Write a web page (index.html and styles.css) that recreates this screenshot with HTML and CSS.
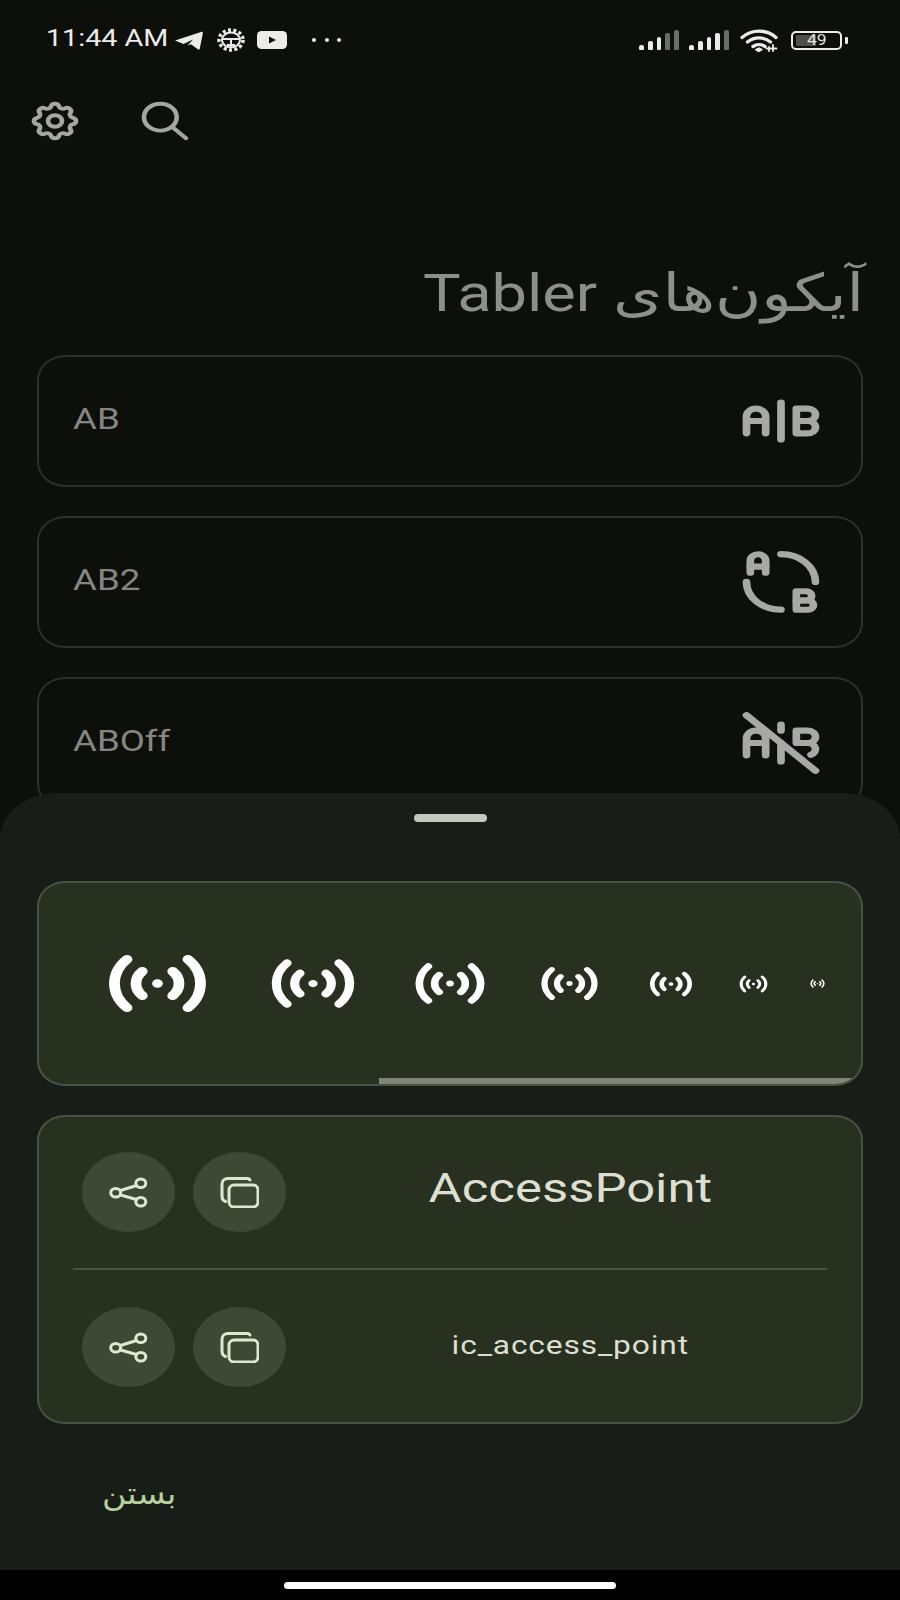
FILE: index.html
```html
<!DOCTYPE html>
<html lang="fa">
<head>
    <meta charset="UTF-8">
    <meta name="viewport" content="width=device-width, initial-scale=1.0">
    <title>Tabler Icons</title>
    <link rel="stylesheet" href="styles.css">
</head>
<body>

    <svg class="defs" aria-hidden="true">
        <defs>
            <g id="i-access-point">
                <path d="M12 12l0 .01"/>
                <path d="M14.828 9.172a4 4 0 0 1 0 5.656"/>
                <path d="M17.657 6.343a8 8 0 0 1 0 11.314"/>
                <path d="M9.168 14.828a4 4 0 0 1 0 -5.656"/>
                <path d="M6.337 17.657a8 8 0 0 1 0 -11.314"/>
            </g>
            <g id="i-share">
                <ellipse cx="6.700" cy="15.700" rx="5" ry="4.300"/>
                <ellipse cx="31.800" cy="6.300" rx="5" ry="4.300"/>
                <ellipse cx="31.800" cy="24.700" rx="5" ry="4.300"/>
                <path d="M11.500 13.500l16 -5"/>
                <path d="M11.500 18l16 4.500"/>
            </g>
            <g id="i-copy">
                <rect x="9" y="8" width="29" height="22" rx="5"/>
                <path d="M30 3c-.5 -1 -1.500 -1.500 -3 -1.500h-19c-3.500 0 -6 2.500 -6 5.500v12.500c0 2.500 1 4 3.500 5"/>
            </g>
        </defs>
    </svg>

    <div class="screen">

        <div class="status-bar">
            <div class="status-left">
                <span class="time">11:44 AM</span>
                <svg class="st-telegram" viewBox="0 0 28 19"><path d="M0 9.500l26 -8.500c1.500 -.5 2 .3 1.800 1.500l-3 15c-.3 1.300 -1 1.500 -2 .8l-6.800 -5l-3.500 1.200l5.500 -6l-9.500 4.500z"/></svg>
                <svg class="st-bug" viewBox="0 0 28 24">
                    <ellipse class="bug-teeth" cx="14" cy="12" rx="12" ry="10"/>
                    <ellipse class="bug-ring" cx="14" cy="12" rx="9" ry="7.500"/>
                    <path class="bug-ring" d="M5 11h18M14 11v8M10 17h8"/>
                </svg>
                <svg class="st-youtube" viewBox="0 0 30 18">
                    <rect width="30" height="18" rx="4.500"/>
                    <path class="yt-play" d="M12 5.500l7 3.500l-7 3.500z"/>
                </svg>
                <span class="st-dots"><i></i><i></i><i></i></span>
            </div>
            <div class="status-right">
                <div class="signal">
                    <i class="b1"></i><i class="b2"></i><i class="b3"></i><i class="b4 dim"></i><i class="b5 dim"></i>
                </div>
                <div class="signal">
                    <i class="b1"></i><i class="b2"></i><i class="b3"></i><i class="b4"></i><i class="b5 dim"></i>
                </div>
                <svg class="st-wifi" viewBox="0 0 38 23">
                    <path d="M2 8.500c10 -8.500 24 -8.500 34 0"/>
                    <path d="M7.500 13c7 -5.500 16 -5.500 23 0"/>
                    <path d="M13 17.500c3.500 -2.500 8.500 -2.500 12 0"/>
                    <path class="wifi-dot" d="M15.500 20.500l3.500 -1.700l3.500 1.700l-3.500 2.500z"/>
                    <path class="wifi-mark" d="M29 22v-4M33 22v-6M26.500 19.500h4M31.500 19.500h5"/>
                </svg>
                <div class="battery">
                    <div class="battery-body"><div class="battery-fill"></div><span class="battery-text">49</span></div>
                    <div class="battery-nub"></div>
                </div>
            </div>
        </div>

        <div class="toolbar">
            <svg class="tool-icon" viewBox="0 0 24 24" preserveAspectRatio="none">
                <path d="M10.325 4.317c.426 -1.756 2.924 -1.756 3.35 0a1.724 1.724 0 0 0 2.573 1.066c1.543 -.94 3.31 .826 2.37 2.37a1.724 1.724 0 0 0 1.065 2.572c1.756 .426 1.756 2.924 0 3.35a1.724 1.724 0 0 0 -1.066 2.573c.94 1.543 -.826 3.31 -2.37 2.37a1.724 1.724 0 0 0 -2.572 1.065c-.426 1.756 -2.924 1.756 -3.35 0a1.724 1.724 0 0 0 -2.573 -1.066c-1.543 .94 -3.31 -.826 -2.37 -2.37a1.724 1.724 0 0 0 -1.065 -2.572c-1.756 -.426 -1.756 -2.924 0 -3.35a1.724 1.724 0 0 0 1.066 -2.573c-.94 -1.543 .826 -3.31 2.37 -2.37c1 .608 2.296 .07 2.572 -1.065z"/>
                <path d="M9 12a3 3 0 1 0 6 0a3 3 0 0 0 -6 0"/>
            </svg>
            <svg class="tool-icon" viewBox="0 0 24 24" preserveAspectRatio="none">
                <path d="M10 10m-7 0a7 7 0 1 0 14 0a7 7 0 1 0 -14 0"/>
                <path d="M21 21l-6 -6"/>
            </svg>
        </div>

        <h1 class="page-title" dir="rtl"><span>آیکون‌های Tabler</span></h1>

        <div class="icon-list">
            <div class="icon-card">
                <span class="icon-name">AB</span>
                <svg class="list-icon" viewBox="0 0 24 24" preserveAspectRatio="none">
                    <path d="M3 16v-5.500a2.500 2.500 0 0 1 5 0v5.500m0 -4h-5"/>
                    <path d="M12 6l0 12"/>
                    <path d="M16 16v-8h3a2 2 0 0 1 0 4h-3m3 0a2 2 0 0 1 0 4h-3"/>
                </svg>
            </div>
            <div class="icon-card">
                <span class="icon-name">AB2</span>
                <svg class="list-icon" viewBox="0 0 24 24" preserveAspectRatio="none">
                    <path d="M16 21h3c.81 0 1.48 -.67 1.48 -1.48l.02 -.02c0 -.82 -.69 -1.500 -1.500 -1.500h-3v3z"/>
                    <path d="M16 15h2.500c.84 -.01 1.500 .66 1.500 1.500s-.66 1.500 -1.500 1.500h-2.500v-3z"/>
                    <path d="M4 9v-4c0 -1.036 .895 -2 2 -2s2 .964 2 2v4"/>
                    <path d="M2.990 11.980a9 9 0 0 0 9 9m9 -9a9 9 0 0 0 -9 -9"/>
                    <path d="M8 7h-4"/>
                </svg>
            </div>
            <div class="icon-card">
                <span class="icon-name">ABOff</span>
                <svg class="list-icon" viewBox="0 0 24 24" preserveAspectRatio="none">
                    <path d="M3 16v-5.500a2.500 2.500 0 0 1 5 0v5.500m0 -4h-5"/>
                    <path d="M12 12v6"/>
                    <path d="M12 6v2"/>
                    <path d="M16 8h3a2 2 0 1 1 0 4h-3m3 0a2 2 0 0 1 .83 3.820m-3.830 -3.820v-4"/>
                    <path d="M3 3l18 18"/>
                </svg>
            </div>
        </div>

        <div class="sheet">
            <div class="sheet-handle"></div>

            <div class="preview-card">
                <svg class="ap ap-1" viewBox="0 0 24 24" preserveAspectRatio="none"><use href="#i-access-point"/></svg>
                <svg class="ap ap-2" viewBox="0 0 24 24" preserveAspectRatio="none"><use href="#i-access-point"/></svg>
                <svg class="ap ap-3" viewBox="0 0 24 24" preserveAspectRatio="none"><use href="#i-access-point"/></svg>
                <svg class="ap ap-4" viewBox="0 0 24 24" preserveAspectRatio="none"><use href="#i-access-point"/></svg>
                <svg class="ap ap-5" viewBox="0 0 24 24" preserveAspectRatio="none"><use href="#i-access-point"/></svg>
                <svg class="ap ap-6" viewBox="0 0 24 24" preserveAspectRatio="none"><use href="#i-access-point"/></svg>
                <svg class="ap ap-7" viewBox="0 0 24 24" preserveAspectRatio="none"><use href="#i-access-point"/></svg>
                <div class="scroll-thumb"></div>
            </div>

            <div class="name-card">
                <div class="name-row">
                    <button class="round-btn" type="button"><svg viewBox="0 0 39 31"><use href="#i-share"/></svg></button>
                    <button class="round-btn" type="button"><svg viewBox="0 0 39 31"><use href="#i-copy"/></svg></button>
                    <div class="name-text"><span class="name-big">AccessPoint</span></div>
                </div>
                <div class="name-divider"></div>
                <div class="name-row">
                    <button class="round-btn" type="button"><svg viewBox="0 0 39 31"><use href="#i-share"/></svg></button>
                    <button class="round-btn" type="button"><svg viewBox="0 0 39 31"><use href="#i-copy"/></svg></button>
                    <div class="name-text"><span class="name-small">ic_access_point</span></div>
                </div>
            </div>

            <div class="sheet-actions"><span class="close-btn">بستن</span></div>

            <div class="nav-bar"><div class="home-pill"></div></div>
        </div>

    </div>

</body>
</html>
```

FILE: styles.css
```css
* {
    box-sizing: border-box;
}

body {
    margin: 0;
    background-color: #0d0f0b;
    font-family: Roboto, "DejaVu Sans", sans-serif;
}

.defs {
    position: absolute;
    width: 0;
    height: 0;
}

.screen {
    position: relative;
    width: 900px;
    height: 1600px;
    overflow: hidden;
    background-color: #0d0f0b;
}

/* status bar */
.status-bar {
    display: flex;
    justify-content: space-between;
    align-items: center;
    height: 80px;
    padding: 0 52px 0 46px;
}

.status-left,
.status-right {
    display: flex;
    align-items: center;
}

.time {
    display: inline-block;
    width: 129px;
    margin-bottom: 4px;
    font-size: 23.5px;
    color: #ececea;
    transform: scaleX(1.22);
    transform-origin: left center;
}

.st-telegram {
    width: 28px;
    height: 19px;
    fill: #ececea;
}

.st-bug {
    width: 28px;
    height: 24px;
    margin-left: 14px;
    fill: none;
    stroke: #ececea;
}

.bug-teeth {
    stroke-width: 3.500;
    stroke-dasharray: 3 2.400;
}

.bug-ring {
    stroke-width: 2;
}

.st-youtube {
    width: 30px;
    height: 18px;
    margin-left: 12px;
    fill: #ececea;
}

.yt-play {
    fill: #0d0f0b;
}

.st-dots {
    display: flex;
    gap: 8.500px;
    margin-left: 25px;
}

.st-dots i {
    width: 4px;
    height: 4px;
    border-radius: 50%;
    background-color: #ececea;
}

.signal {
    display: flex;
    align-items: flex-end;
    gap: 4px;
    height: 20px;
    margin-right: 10px;
}

.signal i {
    width: 4.800px;
    border-radius: 2px 2px 1px 1px;
    background-color: #ececea;
}

.signal .dim {
    background-color: #6c6d6a;
}

.b1 { height: 5px; }
.b2 { height: 9px; }
.b3 { height: 13px; }
.b4 { height: 17px; }
.b5 { height: 20px; }

.st-wifi {
    width: 38px;
    height: 23px;
    margin: 0 13px 0 1px;
    fill: none;
    stroke: #ececea;
    stroke-width: 3.400;
    stroke-linecap: round;
}

.wifi-dot {
    fill: #ececea;
    stroke-width: 1;
}

.wifi-mark {
    stroke-width: 1.800;
}

.battery {
    display: flex;
    align-items: center;
    gap: 3px;
}

.battery-body {
    position: relative;
    display: flex;
    align-items: center;
    justify-content: center;
    width: 51px;
    height: 19px;
    border: 2px solid #ececea;
    border-radius: 5px;
}

.battery-fill {
    position: absolute;
    left: 3px;
    top: 2px;
    bottom: 2px;
    width: 20px;
    border-radius: 1px;
    background-color: #4e4f4c;
}

.battery-text {
    position: relative;
    font-size: 14px;
    color: #e2e2df;
    transform: scaleX(1.250);
}

.battery-nub {
    width: 3px;
    height: 7px;
    border-radius: 1px;
    background-color: #ececea;
}

/* top toolbar */
.toolbar {
    display: flex;
    gap: 54px;
    padding: 18px 0 0 27px;
}

.tool-icon {
    width: 56px;
    height: 46px;
    fill: none;
    stroke: #a5a6a2;
    stroke-width: 2;
    stroke-linecap: round;
    stroke-linejoin: round;
}

.page-title {
    margin: 120px 36px 31px 37px;
    font-size: 52px;
    font-weight: 400;
    line-height: 60px;
    color: #8d8f8a;
}

.page-title span {
    display: inline-block;
    transform: scaleX(1.215);
    transform-origin: right center;
}

/* icon list behind the sheet */
.icon-list {
    display: flex;
    flex-direction: column;
    gap: 29px;
    margin: 0 37px;
}

.icon-card {
    display: flex;
    justify-content: space-between;
    align-items: center;
    height: 132px;
    padding: 0 34px;
    border: 2px solid #2d2f2b;
    border-radius: 28px / 25px;
}

.icon-name {
    display: inline-block;
    margin-bottom: 6px;
    font-size: 30px;
    color: #858682;
    transform: scaleX(1.220);
    transform-origin: left center;
}

.list-icon {
    width: 92px;
    height: 74px;
    fill: none;
    stroke: #a8a9a6;
    stroke-width: 2;
    stroke-linecap: round;
    stroke-linejoin: round;
}

/* bottom sheet */
.sheet {
    position: absolute;
    top: 793px;
    left: 0;
    right: 0;
    bottom: 0;
    display: flex;
    flex-direction: column;
    padding: 21px 37px 0;
    border-radius: 56px 56px 0 0 / 46px 46px 0 0;
    background-color: #191d17;
}

.sheet-handle {
    flex: none;
    width: 73px;
    height: 8px;
    margin: 0 auto 59px;
    border-radius: 4px;
    background-color: #c5c8bd;
}

.preview-card {
    position: relative;
    flex: none;
    display: flex;
    align-items: center;
    gap: 36px;
    height: 205px;
    padding: 0 0 0 54px;
    overflow: hidden;
    border: 2px solid #4c5145;
    border-radius: 28px / 25px;
    background-color: #283120;
}

.ap {
    flex: none;
    fill: none;
    stroke: #ffffff;
    stroke-width: 2;
    stroke-linecap: round;
    stroke-linejoin: round;
}

.ap-1 { width: 129px; height: 103px; }
.ap-2 { width: 110px; height: 87px; }
.ap-3 { width: 92px; height: 73px; }
.ap-4 { width: 75px; height: 59px; }
.ap-5 { width: 56px; height: 44px; }
.ap-6 { width: 37px; height: 30px; }
.ap-7 { width: 19px; height: 15px; }

.scroll-thumb {
    position: absolute;
    left: 340px;
    right: 0;
    bottom: 0;
    height: 6px;
    background-color: #7f8677;
}

.name-card {
    flex: none;
    margin-top: 29px;
    padding: 35px 34px;
    border: 2px solid #4c5145;
    border-radius: 28px / 25px;
    background-color: #283120;
}

.name-row {
    display: flex;
    align-items: center;
    gap: 18px;
    padding-left: 9px;
}

.round-btn {
    flex: none;
    display: flex;
    align-items: center;
    justify-content: center;
    width: 93px;
    height: 80px;
    padding: 0;
    border: none;
    border-radius: 50%;
    background-color: #3d4935;
}

.round-btn svg {
    width: 39px;
    height: 31px;
    fill: none;
    stroke: #dfe8cf;
    stroke-width: 3;
    stroke-linecap: round;
    stroke-linejoin: round;
}

.name-text {
    flex: 1;
    margin-left: 9px;
    text-align: center;
    color: #dcdfd2;
}

.name-big {
    display: inline-block;
    margin-bottom: 9px;
    font-size: 41px;
    transform: scaleX(1.240);
}

.name-small {
    display: inline-block;
    margin-bottom: 4px;
    font-size: 26px;
    letter-spacing: 0.7px;
    transform: scaleX(1.220);
}

.name-divider {
    height: 2px;
    margin: 36px 0 37px;
    background-color: #4c5145;
}

.sheet-actions {
    padding: 52px 0 0 65px;
}

.close-btn {
    display: inline-block;
    font-size: 30px;
    color: #b5d29a;
    transform: scaleX(1.110);
    transform-origin: left center;
}

/* navigation bar */
.nav-bar {
    display: flex;
    justify-content: center;
    align-items: flex-start;
    flex: none;
    height: 30px;
    margin: auto -37px 0;
    padding-top: 12px;
    background-color: #000000;
}

.home-pill {
    width: 332px;
    height: 7px;
    border-radius: 4px;
    background-color: #ffffff;
}
```
